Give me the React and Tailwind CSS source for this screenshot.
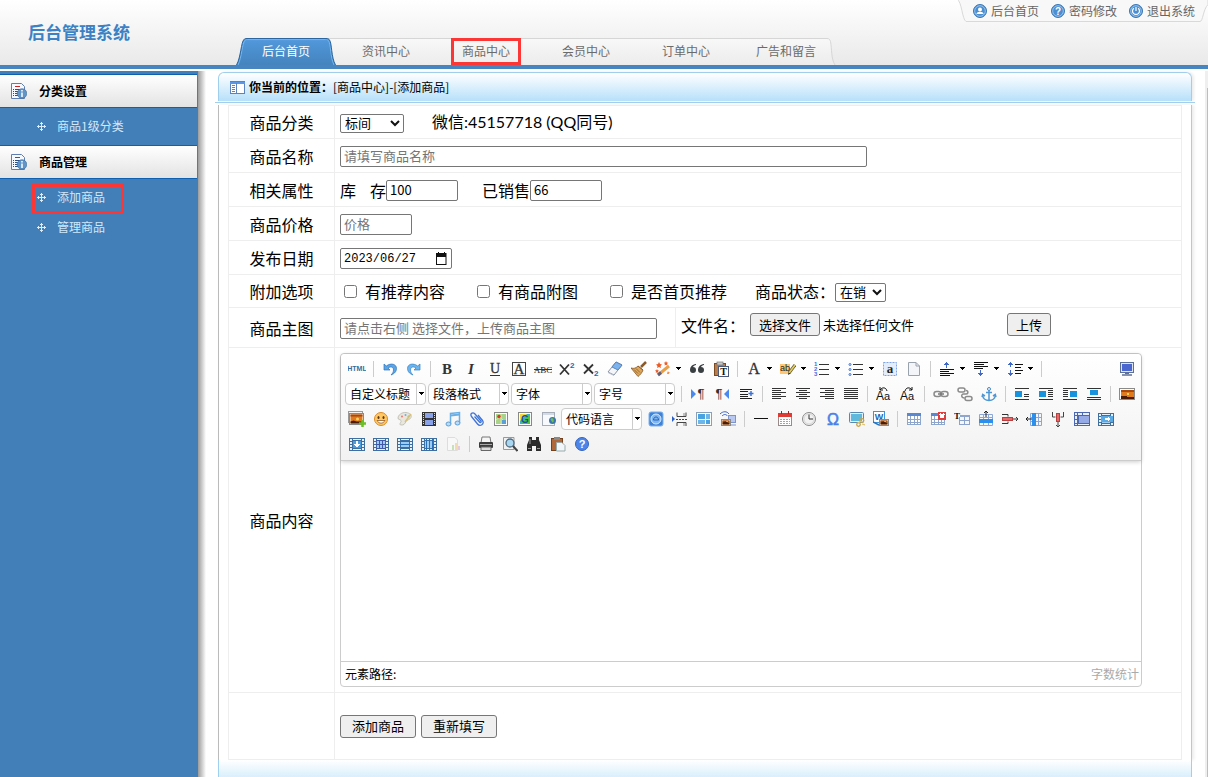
import React, { useState } from 'react';

const cjk = 'font-["Noto_Sans_CJK_SC",sans-serif]';

/* ---------- toolbar icons ---------- */

const Svg = ({ children, crisp }) => (
  <svg width="16" height="16" viewBox="0 0 16 16" fill="none" shapeRendering={crisp ? 'crispEdges' : 'auto'} aria-hidden="true">
    {children}
  </svg>
);

// rows: list of [x, y, width]
const Bars = ({ rows, color = '#333' }) =>
  rows.map(([x, y, w]) => <rect key={`${x}-${y}`} x={x} y={y} width={w} height="1" fill={color} />);

const TableGrid = ({ head = '#5b86d0', line = '#8fa6cc' }) => (
  <>
    <rect x="1.500" y="2.500" width="13" height="11" fill="#fff" stroke={line} />
    <rect x="1" y="2" width="14" height="3" fill={head} />
    <path d="M1 8.500H15M1 11.500H15M4.500 5V14M8.500 5V14M11.500 5V14" stroke={line} />
  </>
);

// blue cell block with perforated left and right edges
const Film = ({ children }) => (
  <>
    <rect x="0" y="2" width="16" height="13" fill="#3f6f9f" />
    {[3, 6, 9, 12].map((y) => (
      <React.Fragment key={y}>
        <rect x="1" y={y} width="2" height="2" fill="#e8f2fc" />
        <rect x="13" y={y} width="2" height="2" fill="#e8f2fc" />
      </React.Fragment>
    ))}
    <path d="M4 3h8v1H4zM4 13h8v1H4z" fill="#e8f2fc" />
    <rect x="4" y="5" width="8" height="7" fill="#9ccbf4" />
    {children}
  </>
);

const Sunset = ({ x, y, w, h }) => (
  <>
    <rect x={x} y={y} width={w} height={h} fill="#fff" stroke="#8a8a8a" />
    <rect x={x + 1} y={y + 1} width={w - 2} height={h - 2} fill="#e07a1c" />
    <rect x={x + 1} y={y + 1} width={w - 2} height="2" fill="#a8480e" />
    <circle cx={x + w / 2 + 1} cy={y + h / 2} r="1.500" fill="#ffd25c" />
    <path d={`M${x + 1} ${y + h - 1}v-2l3-1 3 1 ${w - 8} 0v2z`} fill="#4a1c05" />
  </>
);

const Serif = ({ children, size = 15, ...rest }) => (
  <text x="8" y="13" textAnchor="middle" fontFamily="Liberation Serif" fontSize={size} fill="#333" {...rest}>{children}</text>
);

const icons = {
  html: (
    <svg width="18" height="16" viewBox="0 0 18 16" aria-hidden="true">
      <text x="9" y="10" textAnchor="middle" fontFamily="Liberation Sans" fontWeight="bold" fontSize="7" fill="#336b9c">HTML</text>
    </svg>
  ),
  undo: (
    <Svg>
      <path d="M2 3v6h6L6 7c3-2 5.500-1 5.500 2 0 2-1 3.500-2.500 5 4-1.500 5.500-4 5.500-6.500C14.500 3 9 1.500 4.300 5z" fill="#5aa5e6" stroke="#2f74bd" strokeWidth=".7" />
    </Svg>
  ),
  redo: (
    <Svg>
      <path d="M14 3v6H8l2-2C7 5 4.500 6 4.500 9c0 2 1 3.500 2.500 5C3 12.500 1.500 10 1.500 7.500 1.500 3 7 1.500 11.700 5z" fill="#6cb4ec" stroke="#3585c9" strokeWidth=".7" />
    </Svg>
  ),
  bold: <Svg><Serif fontWeight="bold">B</Serif></Svg>,
  italic: <Svg><Serif fontWeight="bold" fontStyle="italic">I</Serif></Svg>,
  underline: <Svg><Serif y="12" size={14} stroke="#333" strokeWidth=".3">U</Serif><path d="M3 14.500H13" stroke="#333" /></Svg>,
  fontborder: <Svg><rect x="1.500" y="1.500" width="13" height="13" stroke="#444" /><Serif size={15} stroke="#333" strokeWidth=".3">A</Serif></Svg>,
  strike: (
    <svg width="18" height="16" viewBox="0 0 18 16" aria-hidden="true">
      <text x="9" y="12" textAnchor="middle" fontFamily="Liberation Serif" fontSize="9" fill="#222">ABC</text>
      <path d="M0 8.500H18" stroke="#333" />
    </svg>
  ),
  sup: (
    <Svg>
      <path d="M1 3.500l9 10M10 3.500l-9 10" stroke="#333" strokeWidth="1.800" />
      <text x="11" y="7" fontFamily="Liberation Sans" fontWeight="bold" fontSize="8" fill="#2c5fc4">2</text>
    </Svg>
  ),
  sub: (
    <Svg>
      <path d="M1 3.500l9 9M10 3.500l-9 9" stroke="#333" strokeWidth="1.800" />
      <text x="11" y="15" fontFamily="Liberation Sans" fontWeight="bold" fontSize="8" fill="#2c5fc4">2</text>
    </Svg>
  ),
  eraser: (
    <Svg>
      <path d="M9 1l6 3-8 10-6-3z" fill="#f4f6fa" stroke="#8792a8" />
      <path d="M9 1l6 3-4 5-6-3z" fill="#7ab3ee" stroke="#5a86bd" />
      <path d="M1 11l6 3v1l-6-3z" fill="#b7bfcc" />
    </Svg>
  ),
  brush: (
    <Svg>
      <path d="M15 1l-5 5" stroke="#8a5a2b" strokeWidth="2.500" />
      <path d="M0 7c3 1 5 0 7-2l5 4c-1 3-3 5-5 6.500z" fill="#dba75c" stroke="#8a561f" strokeWidth=".8" />
      <path d="M3 8.500l4 4M5 7.500l4 4M7 5l5 4" stroke="#8a561f" strokeWidth=".8" />
    </Svg>
  ),
  wand: (
    <Svg>
      <path d="M3 14L14 5" stroke="#e6a04a" strokeWidth="3" />
      <path d="M3 14l3-2.500" stroke="#5e5e7a" strokeWidth="3" />
      <path d="M4 1l1 2 2 .5L5.500 5 6 7 4 6 2 7l.5-2L1 3.500 3 3zM11 0l.7 1.500 1.600.3-1.200 1 .3 1.700L11 3.800l-1.400.7.3-1.700-1.200-1 1.600-.3zM2 8l.6 1.300 1.400.2-1 1 .2 1.400L2 11.300l-1.200.6.2-1.400-1-1 1.400-.2z" fill="#ee5a24" />
      <path d="M13 10l.6 1.300 1.400.2-1 1-1 .8-1-.8z" fill="#f0803c" />
    </Svg>
  ),
  quote: (
    <Svg>
      <path d="M7 3C3 3.500 1 6 1 9a3 3 0 1 0 3-3c.5-1 1.500-1.700 3-2zM15 3c-4 .5-6 3-6 6a3 3 0 1 0 3-3c.5-1 1.500-1.700 3-2z" fill="#3a3f42" />
    </Svg>
  ),
  pastetext: (
    <Svg>
      <rect x="1.500" y="2.500" width="11" height="12" fill="#b97c4c" stroke="#7d4a22" />
      <rect x="4" y="1" width="6" height="3" fill="#c9c9c9" stroke="#777" strokeWidth=".7" />
      <rect x="5.500" y="5.500" width="10" height="10" fill="#fff" stroke="#4a5a78" />
      <text x="10.500" y="14" textAnchor="middle" fontFamily="Liberation Serif" fontWeight="bold" fontSize="10" fill="#111">T</text>
    </Svg>
  ),
  forecolor: <Svg><Serif size={16} stroke="#333" strokeWidth=".3">A</Serif></Svg>,
  backcolor: (
    <Svg>
      <rect x="0" y="3" width="10" height="10" fill="#ffc773" />
      <text x="0" y="10" fontFamily="Liberation Sans" fontSize="9" fill="#222">ab</text>
      <path d="M15 4l-6 8" stroke="#6a5a2c" strokeWidth="3" />
      <path d="M15 4l-6 8" stroke="#e2cf62" strokeWidth="1.500" />
      <path d="M8 14l.5-2.500 2 1z" fill="#222" />
    </Svg>
  ),
  ol: (
    <Svg>
      <text x="0" y="5" fontFamily="Liberation Sans" fontWeight="bold" fontSize="6" fill="#3a72dd">1</text>
      <text x="0" y="10" fontFamily="Liberation Sans" fontWeight="bold" fontSize="6" fill="#3a72dd">2</text>
      <text x="0" y="15" fontFamily="Liberation Sans" fontWeight="bold" fontSize="6" fill="#3a72dd">3</text>
      <Bars rows={[[5, 3, 10], [5, 8, 10], [5, 13, 10]]} />
    </Svg>
  ),
  ul: (
    <Svg>
      {[3, 8, 13].map((y) => <circle key={y} cx="2" cy={y + 0.5} r="1" stroke="#3a72dd" />)}
      <Bars rows={[[5, 3, 10], [5, 8, 10], [5, 13, 10]]} />
    </Svg>
  ),
  selectall: (
    <Svg>
      <rect x="1.500" y="1.500" width="13" height="13" fill="#e3edfc" stroke="#7fa5e8" strokeDasharray="2 1" />
      <text x="8" y="12" textAnchor="middle" fontFamily="Liberation Serif" fontWeight="bold" fontSize="13" fill="#222">a</text>
    </Svg>
  ),
  page: (
    <Svg>
      <path d="M2.500 1.500H10l3.500 3.500v9.500h-11z" fill="#f3f5f8" stroke="#9aa2ad" />
      <path d="M10 1.500V5h3.500" stroke="#9aa2ad" />
    </Svg>
  ),
  rowtop: (
    <Svg crisp>
      <path d="M7 1h1v1h1v1h1v1H8v3H7V4H5V3h1V2h1z" fill="#3f68c8" />
      <Bars color="#111" rows={[[1, 8, 14], [1, 10, 9], [1, 12, 14], [1, 14, 10]]} />
    </Svg>
  ),
  rowbottom: (
    <Svg crisp>
      <Bars color="#111" rows={[[1, 1, 14], [1, 3, 10], [1, 5, 14], [1, 7, 9]]} />
      <path d="M7 9h1v3h2v1H9v1H8v1H7v-1H6v-1H5v-1h2z" fill="#3f68c8" />
    </Svg>
  ),
  lineheight: (
    <Svg crisp>
      <path d="M3 1h1v1h1v1h1v1H4v2H3V4H1V3h1V2h1zM3 9h1v3h2v1H5v1H4v1H3v-1H2v-1H1v-1h2z" fill="#3f68c8" />
      <Bars color="#111" rows={[[8, 3, 8], [8, 6, 6], [8, 9, 8], [8, 12, 6]]} />
    </Svg>
  ),
  fullscreen: (
    <Svg>
      <rect x="1.500" y="1.500" width="13" height="10" fill="#dfe6f2" stroke="#5c6f96" />
      <rect x="3" y="3" width="10" height="7" fill="#4a67d0" />
      <rect x="6" y="12" width="4" height="1" fill="#5c6f96" />
      <path d="M3 14H13" stroke="#5c6f96" strokeWidth="1.500" />
    </Svg>
  ),
  ltr: (
    <Svg>
      <path d="M1 3l5 5-5 5z" fill="#4a8af0" />
      <text x="11" y="12" textAnchor="middle" fontFamily="Liberation Sans" fontSize="13" fill="#333">¶</text>
    </Svg>
  ),
  rtl: (
    <Svg>
      <path d="M15 3l-5 5 5 5z" fill="#4a8af0" />
      <text x="5" y="12" textAnchor="middle" fontFamily="Liberation Sans" fontSize="13" fill="#333">¶</text>
    </Svg>
  ),
  indent: (
    <Svg>
      <Bars color="#222" rows={[[2, 3, 12], [2, 5, 8], [2, 8, 8], [2, 10, 8], [2, 12, 12]]} />
      <path d="M10.500 7.500h5M13 5v5" stroke="#3a72dd" strokeWidth="1.500" />
    </Svg>
  ),
  left: <Svg crisp><Bars rows={[[1, 2, 14], [1, 4, 9], [1, 6, 14], [1, 8, 9], [1, 10, 14], [1, 12, 9]]} /></Svg>,
  center: <Svg crisp><Bars rows={[[1, 2, 14], [4, 4, 8], [1, 6, 14], [4, 8, 8], [1, 10, 14], [4, 12, 8]]} /></Svg>,
  right: <Svg crisp><Bars rows={[[1, 2, 14], [6, 4, 9], [1, 6, 14], [6, 8, 9], [1, 10, 14], [6, 12, 9]]} /></Svg>,
  justify: <Svg crisp><Bars rows={[[1, 2, 14], [1, 4, 14], [1, 6, 14], [1, 8, 14], [1, 10, 14], [1, 12, 14]]} /></Svg>,
  upper: (
    <Svg>
      <text x="0" y="14" fontFamily="Liberation Sans" fontSize="12" fill="#111">A</text>
      <text x="8" y="14" fontFamily="Liberation Sans" fontSize="11" fill="#111">a</text>
      <path d="M4 4c2-3 6-3 7 1M4 1v3h3" stroke="#111" />
    </Svg>
  ),
  lower: (
    <Svg>
      <text x="0" y="14" fontFamily="Liberation Sans" fontSize="12" fill="#111">A</text>
      <text x="8" y="14" fontFamily="Liberation Sans" fontSize="11" fill="#111">a</text>
      <path d="M12 4C10 1 6 1 5 5M12 1v3H9" stroke="#111" />
    </Svg>
  ),
  link: (
    <Svg>
      <rect x="1" y="5.500" width="7" height="5" rx="2.500" stroke="#8b8b8b" strokeWidth="1.500" />
      <rect x="8" y="5.500" width="7" height="5" rx="2.500" stroke="#8b8b8b" strokeWidth="1.500" />
      <path d="M5 8h6" stroke="#777" strokeWidth="1.500" />
    </Svg>
  ),
  unlink: (
    <Svg>
      <rect x="1" y="2" width="7" height="4" rx="2" stroke="#8b8b8b" strokeWidth="1.500" />
      <rect x="8" y="10.500" width="7" height="4" rx="2" stroke="#8b8b8b" strokeWidth="1.500" />
      <path d="M9 4.500c2.500 0 2.500 3.500 0 3.500H6.500c-2.500 0-2.500 4 1 4" stroke="#8b8b8b" strokeWidth="1.500" />
    </Svg>
  ),
  anchor: (
    <Svg>
      <circle cx="8" cy="3" r="1.500" stroke="#3f8acb" />
      <path d="M8 4.500V14M5 6.500h6M1.500 9c.5 3.500 3 5.500 6.500 5.500s6-2 6.500-5.500M1 11l.7-2.500L4 10M15 11l-.7-2.500L12 10" stroke="#4f97d4" strokeWidth="1.500" />
    </Svg>
  ),
  imgleft: (
    <Svg crisp>
      <Bars rows={[[1, 2, 14], [10, 8, 5], [10, 10, 5], [1, 13, 14]]} />
      <rect x="1" y="5" width="7" height="6" fill="#1693dc" />
    </Svg>
  ),
  imgfloatleft: (
    <Svg crisp>
      <Bars rows={[[1, 2, 14], [10, 4, 5], [10, 6, 5], [10, 8, 5], [10, 10, 5], [1, 13, 14]]} />
      <rect x="1" y="5" width="7" height="6" fill="#1693dc" />
    </Svg>
  ),
  imgfloatright: (
    <Svg crisp>
      <Bars rows={[[1, 2, 14], [1, 4, 5], [1, 6, 5], [1, 8, 5], [1, 10, 5], [1, 13, 14]]} />
      <rect x="8" y="5" width="7" height="6" fill="#1693dc" />
    </Svg>
  ),
  imgcenter: (
    <Svg crisp>
      <Bars rows={[[1, 2, 14], [1, 11, 14], [1, 13, 14]]} />
      <rect x="4" y="4" width="8" height="5" fill="#1693dc" />
    </Svg>
  ),
  simpleupload: <Svg crisp><Sunset x={0.5} y={2.5} w={15} h={11} /></Svg>,
  images: (
    <svg width="18" height="16" viewBox="0 0 18 16" fill="none" aria-hidden="true">
      <rect x=".5" y=".5" width="14" height="11" fill="#f4f4f4" stroke="#999" />
      <Sunset x={1.5} y={2.5} w={14} h={11} />
      <path d="M14.500 9v7M11 12.500h7" stroke="#6cbf25" strokeWidth="2.500" />
    </svg>
  ),
  emotion: (
    <Svg>
      <circle cx="8" cy="8" r="6.500" fill="#ffc862" stroke="#dc8a26" />
      <ellipse cx="5.500" cy="6.500" rx="1" ry="1.500" fill="#5a3310" />
      <ellipse cx="10.500" cy="6.500" rx="1" ry="1.500" fill="#5a3310" />
      <path d="M4 9.500c2 3.500 6 3.500 8 0z" fill="#fff" stroke="#8a4a12" strokeWidth=".7" />
    </Svg>
  ),
  scrawl: (
    <Svg>
      <path d="M1 7c0-3 4-6 8-5.500s6 2.500 5 5-4 2-5 4-2 4-5 3.500 1-3 0-4.500S1 9 1 7z" fill="#e9e6dc" stroke="#b9b7ac" strokeWidth=".8" />
      <circle cx="5" cy="5.500" r="1" fill="#e77" />
      <circle cx="8.500" cy="4" r="1" fill="#6ab0e8" />
      <circle cx="11.500" cy="5.500" r="1" fill="#7c7" />
      <path d="M14 3L8 11" stroke="#d8c07a" strokeWidth="1.500" />
    </Svg>
  ),
  video: (
    <Svg crisp>
      <rect x="1" y="1" width="14" height="14" fill="#333" />
      <rect x="4" y="2" width="8" height="5" fill="#8aa3e8" />
      <rect x="4" y="9" width="8" height="5" fill="#8aa3e8" />
      <path d="M2.500 2v12M13.500 2v12" stroke="#ddd" strokeDasharray="1 1" />
    </Svg>
  ),
  music: (
    <Svg>
      <path d="M5.500 13V2.500l9-1V12" stroke="#6aaee6" strokeWidth="1.500" />
      <path d="M5.500 4.500l9-1" stroke="#6aaee6" strokeWidth="2" />
      <ellipse cx="3.500" cy="13" rx="2.500" ry="2" fill="#b8dcf8" stroke="#5c9ed8" />
      <ellipse cx="12.500" cy="12" rx="2.500" ry="2" fill="#b8dcf8" stroke="#5c9ed8" />
    </Svg>
  ),
  attachment: (
    <Svg>
      <path d="M5.500 5.500l5 5.500c1 1.200 2.300 0 1.300-1.200L6 3C3.500.5.5 3 2.500 5.500l6 7.500c2.500 3 7.500 0 5-3.500L9 4" stroke="#3f74d8" strokeWidth="1.300" />
    </Svg>
  ),
  map: (
    <Svg>
      <rect x="1.500" y="1.500" width="13" height="13" fill="#fff" stroke="#888" />
      <rect x="3" y="3" width="10" height="10" fill="#a8d38a" />
      <path d="M3 9l4-3 6 6M8 3v10" stroke="#e8e29a" />
      <rect x="9" y="9" width="4" height="4" fill="#5a9fd8" />
      <circle cx="6" cy="5.500" r="1.700" fill="#d63a2a" />
    </Svg>
  ),
  gmap: (
    <Svg>
      <rect x="1.500" y="1.500" width="13" height="13" fill="#fff" stroke="#888" />
      <rect x="3" y="3" width="10" height="10" fill="#2fb4d8" />
      <path d="M3 13L13 3v10z" fill="#4bc83a" />
      <path d="M3 3h7L3 10z" fill="#f5d93a" />
      <text x="8" y="12" textAnchor="middle" fontFamily="Liberation Sans" fontWeight="bold" fontSize="10" fill="#1c4fa0">G</text>
    </Svg>
  ),
  iframe: (
    <Svg>
      <rect x="1.500" y="1.500" width="12" height="13" fill="#f7f9fc" stroke="#a6adb8" />
      <rect x="2" y="2" width="11" height="2" fill="#d4dbe6" />
      <circle cx="11.500" cy="9.500" r="3.500" fill="#3b76af" />
      <path d="M9.500 8.500c1-2 3-1 3 0s1 2-1 3z" fill="#73c04a" />
    </Svg>
  ),
  webapp: (
    <Svg>
      <rect x="1" y="1" width="14" height="14" rx="2" fill="#3f83d8" stroke="#7fb0ea" />
      <circle cx="8" cy="8" r="5" fill="#7db6f2" stroke="#d8ebff" />
      <path d="M5.500 9c0-4 5-4 5 0z" stroke="#2b62b4" />
    </Svg>
  ),
  pagebreak: (
    <Svg>
      <path d="M0 5l3 3-3 3z" fill="#2c62c8" />
      <path d="M4 8.500h2m1 0h2m1 0h2m1 0h2M5 1.500v4h9v-4M5 15v-3.500h9V15" stroke="#444" />
      <path d="M12 12v3M12 2v3" stroke="#888" />
    </Svg>
  ),
  template: (
    <Svg crisp>
      <rect x="0.500" y="1.500" width="15" height="13" fill="#fff" stroke="#8aa0b8" />
      <rect x="2" y="3" width="7" height="5" fill="#4aa3e0" />
      <rect x="2" y="9" width="7" height="4" fill="#6db6ea" />
      <rect x="10" y="3" width="4" height="5" fill="#6db6ea" />
      <rect x="10" y="9" width="4" height="4" fill="#4aa3e0" />
    </Svg>
  ),
  background: (
    <Svg>
      <rect x="8.500" y="4.500" width="7" height="7" fill="#b9c8f0" stroke="#7d93cb" />
      <path d="M11 14h5" stroke="#7d93cb" />
      <path d="M0 3c3-3 7-3 9 0M2 5c2-2 4-2 5.500 0" stroke="#3a62c8" />
      <Sunset x={1.5} y={8.5} w={9} h={6} />
    </Svg>
  ),
  hr: <Svg crisp><rect x="1" y="7" width="14" height="1" fill="#111" /></Svg>,
  date: (
    <Svg crisp>
      <rect x="1.500" y="2.500" width="13" height="12" fill="#fff" stroke="#9a8a8a" />
      <rect x="1" y="2" width="14" height="4" fill="#dd3b34" />
      <path d="M4.500 0v3M11.500 0v3" stroke="#a8201c" />
      <path d="M3 8.500h10M3 10.500h10M3 12.500h10" stroke="#9aa5b5" strokeDasharray="2 1" />
    </Svg>
  ),
  time: (
    <Svg>
      <circle cx="8" cy="8" r="6.500" fill="#f2f2f2" stroke="#8a8a8a" />
      <circle cx="8" cy="8" r="5" stroke="#ccc" strokeWidth=".7" />
      <path d="M8 3.500V8h4" stroke="#333" />
    </Svg>
  ),
  omega: (
    <Svg>
      <text x="8" y="14" textAnchor="middle" fontFamily="Liberation Sans" fontSize="16" fill="#4a80e8" stroke="#4a80e8" strokeWidth=".6">Ω</text>
    </Svg>
  ),
  snap: (
    <Svg>
      <rect x="0.500" y="1.500" width="14" height="10" rx="1" fill="#e4eef8" stroke="#5888b0" />
      <rect x="2" y="3" width="11" height="7" fill="#5fb9dc" />
      <circle cx="13" cy="9.500" r="1.800" stroke="#c7a348" strokeWidth="1.300" />
      <circle cx="9.500" cy="13.500" r="1.800" stroke="#c7a348" strokeWidth="1.300" />
      <path d="M12 10l-3 2M13 13l3 1" stroke="#e0c26a" strokeWidth="1.300" />
    </Svg>
  ),
  word: (
    <Svg>
      <rect x="0.500" y="0.500" width="11" height="11" fill="#fff" stroke="#3f94dd" />
      <text x="6" y="9" textAnchor="middle" fontFamily="Liberation Sans" fontWeight="bold" fontSize="9" fill="#1d62b0">W</text>
      <path d="M0 11l6 3" stroke="#2f74bd" strokeWidth="1.500" />
      <Sunset x={6.5} y={8.5} w={9} h={6} />
    </Svg>
  ),
  table: <Svg crisp><TableGrid /></Svg>,
  deletetable: (
    <Svg crisp>
      <TableGrid />
      <rect x="8" y="1" width="8" height="8" fill="#e23b3b" />
      <path d="M10 3l4 4M14 3l-4 4" stroke="#fff" strokeWidth="1.500" />
    </Svg>
  ),
  title: (
    <Svg>
      <text x="0" y="8" fontFamily="Liberation Serif" fontWeight="bold" fontSize="9" fill="#111">T</text>
      <rect x="6" y="4" width="10" height="2" fill="#8fa6d0" />
      <path d="M5.500 6v8M5 9.500h11M5 13.500h11M10.500 6v8M15.500 6v8" stroke="#8aa2cc" />
    </Svg>
  ),
  insertrow: (
    <Svg>
      <path d="M1.500 3.500h13v11h-13zM1 6.500h14M5.500 3v12M10.500 3v12" stroke="#8ca6d8" />
      <rect x="1" y="8" width="14" height="4" fill="#2c8fec" />
      <path d="M8 6V0M6 2l2-2 2 2" stroke="#222" />
    </Svg>
  ),
  deleterow: (
    <Svg>
      <path d="M0 3.500h6v2M0 12.500h6v-2M11 8h5M14 6l2 2-2 2" stroke="#333" />
      <rect x="0.500" y="6.500" width="10" height="3" fill="#e66a6a" stroke="#b84040" />
    </Svg>
  ),
  insertcol: (
    <Svg>
      <path d="M4.500 2.500h11v12h-11zM4 6.500h12M4 10.500h12M12.500 2v13" stroke="#8ca6d8" />
      <rect x="6" y="2" width="4" height="13" fill="#2c8fec" />
      <path d="M6 8H0M2 6L0 8l2 2" stroke="#222" />
    </Svg>
  ),
  deletecol: (
    <Svg>
      <path d="M2.500 1v5h3M13.500 1v5h-3M8 11v5M6 14l2 2 2-2" stroke="#444" />
      <rect x="6.500" y="2.500" width="3" height="8" fill="#e66a6a" stroke="#b84040" />
    </Svg>
  ),
  mergecells: (
    <Svg crisp>
      <rect x="0.500" y="1.500" width="15" height="13" fill="#e8eefa" stroke="#4a67b0" />
      <rect x="4" y="4" width="11" height="8" fill="#96aae8" stroke="#4a67b0" />
      <path d="M3.500 1v13M0 4.500h4M0 8.500h4M0 12.500h16M8.500 1v3" stroke="#4a67b0" />
    </Svg>
  ),
  mergeright: <Svg crisp><Film><rect x="3" y="5" width="12" height="6" fill="#5aa8e4" /><path d="M7 7h3V6h1v1h1v2h-1v1h-1V9H7z" fill="#fff" /></Film></Svg>,
  mergedown: <Svg crisp><Film><rect x="4" y="5" width="8" height="7" fill="#4a9fe0" /><path d="M7 5h2v3h2v1h-1v1H9v1H7v-1H6V9H5V8h2z" fill="#fff" /></Film></Svg>,
  splitcells: <Svg crisp><Film><path d="M3 8.500h10M6.500 5v7M9.500 5v7M3 4.500h10M3 12.500h10" stroke="#4458a8" /></Film></Svg>,
  splitrows: <Svg crisp><Film><path d="M3 5.500h10M3 8.500h10M3 11.500h10" stroke="#2a6fb8" /></Film></Svg>,
  splitcols: <Svg crisp><Film><path d="M5.500 3v11M8.500 3v11M11.500 3v11" stroke="#2a6fb8" /></Film></Svg>,
  charts: (
    <Svg>
      <path d="M2.500 1.500H10l2.500 2.500v10.500h-10z" fill="#f8f8f8" stroke="#ddd" />
      <rect x="7" y="9" width="2" height="5" fill="#c6e0b8" />
      <rect x="10" y="7" width="2" height="7" fill="#f0dcae" />
      <rect x="13" y="10" width="2" height="4" fill="#e6cbe0" />
    </Svg>
  ),
  print: (
    <Svg>
      <path d="M4 1h8l1 6H3z" fill="#f6f6f6" stroke="#777" />
      <rect x="1" y="6" width="14" height="6" rx="1" fill="#3c3c3c" />
      <rect x="2" y="8" width="12" height="1" fill="#aaa" />
      <path d="M3 11h10v3.500H3z" fill="#ddd" stroke="#666" />
    </Svg>
  ),
  preview: (
    <Svg>
      <path d="M1.500 1.500H12v12H1.500z" fill="#f2f2f2" stroke="#999" />
      <circle cx="8" cy="7" r="4" fill="#a9d7f2" stroke="#4f6b80" strokeWidth="1.300" />
      <path d="M11 10l4.500 5" stroke="#444" strokeWidth="2" />
    </Svg>
  ),
  search: (
    <Svg>
      <path d="M3 1h3v3h4V1h3v3l2 5v6h-5v-5H6v5H1V9l2-5z" fill="#2c2c2c" />
      <path d="M2 12.500h3M11 12.500h3M4 3v5" stroke="#999" />
    </Svg>
  ),
  paste: (
    <Svg>
      <rect x="1.500" y="2.500" width="11" height="12" fill="#b0683a" stroke="#74401c" />
      <rect x="4" y="1" width="6" height="3" fill="#888" />
      <path d="M6.500 6.500H12l3 3v5.500H6.500z" fill="#f2f5fa" stroke="#9aa" />
    </Svg>
  ),
  help: (
    <Svg>
      <circle cx="8" cy="8" r="6.500" fill="#4d86e8" stroke="#3564c0" />
      <text x="8" y="12" textAnchor="middle" fontFamily="Liberation Sans" fontWeight="bold" fontSize="11" fill="#fff">?</text>
    </Svg>
  ),
};

// "|" is a separator, a trailing "+" marks a split button, "=" opens a combo box
const toolbar = [
  ['html', '|', 'undo', 'redo', '|', 'bold', 'italic', 'underline', 'fontborder', 'strike', 'sup', 'sub', 'eraser', 'brush', 'wand+', 'quote', 'pastetext', '|', 'forecolor+', 'backcolor+', 'ol+', 'ul+', 'selectall', 'page', '|', 'rowtop+', 'rowbottom+', 'lineheight+', '|'],
  ['=自定义标题', '=段落格式', '=字体', '=字号', '|', 'ltr', 'rtl', 'indent', '|', 'left', 'center', 'right', 'justify', '|', 'upper', 'lower', '|', 'link', 'unlink', 'anchor', '|', 'imgleft', 'imgfloatleft', 'imgfloatright', 'imgcenter', '|', 'simpleupload'],
  ['images', 'emotion', 'scrawl', 'video', 'music', 'attachment', 'map', 'gmap', 'iframe', '=代码语言', 'webapp', 'pagebreak', 'template', 'background', '|', 'hr', 'date', 'time', 'omega', 'snap', 'word', '|', 'table', 'deletetable', 'title', 'insertrow', 'deleterow', 'insertcol', 'deletecol', 'mergecells', 'mergeright'],
  ['mergedown', 'splitcells', 'splitrows', 'splitcols', 'charts', '|', 'print', 'preview', 'search', 'paste', 'help'],
];

const Caret = () => (
  <svg width="5" height="3" viewBox="0 0 5 3" shapeRendering="crispEdges" aria-hidden="true">
    <path d="M0 0h5L2.500 3z" fill="#000" />
  </svg>
);

const ToolItem = ({ item }) => {
  if (item === '|') {
    return (
      <span className="flex w-[9px] justify-center">
        <span className="h-4 w-px bg-[#ccc]" />
      </span>
    );
  }
  if (item.startsWith('=')) {
    return (
      <button type="button" className="mr-0.5 flex h-[22px] w-[81px] items-stretch rounded-sm border border-[#ccc] bg-white text-left text-xs leading-5 text-black">
        <span className="flex-1 whitespace-nowrap pl-1">{item.slice(1)}</span>
        <span className="flex w-[9px] items-center justify-center border-l border-[#ccc]">
          <Caret />
        </span>
      </button>
    );
  }
  const split = item.endsWith('+');
  const name = split ? item.slice(0, -1) : item;
  return (
    <button type="button" aria-label={name} className="flex h-6 items-center">
      <span className="flex w-6 justify-center">{icons[name]}</span>
      {split && (
        <span className="flex w-[10px] pl-px">
          <Caret />
        </span>
      )}
    </button>
  );
};

const Editor = () => (
  <div className="w-[802px] max-w-full rounded border border-[#ccc] bg-white">
    <div className="relative rounded-t border-b border-[#ccc] bg-linear-to-b from-white to-[#f2f2f2] pb-1 pl-1 pt-0.5 shadow-[0_1px_4px_rgba(0,0,0,0.2)]">
      {toolbar.map((row, i) => (
        <div key={i} className="flex h-[25px] items-center">
          {row.map((item, j) => (
            <ToolItem key={j} item={item} />
          ))}
          {i === 0 && (
            <div className="ml-auto pr-0.5">
              <ToolItem item="fullscreen" />
            </div>
          )}
        </div>
      ))}
    </div>
    <textarea id="content" className="block h-[200px] w-full resize-none px-2 py-1 text-base outline-none" />
    <div className="flex h-[25px] items-center justify-between border-t border-[#ccc] pl-1 pr-0.5 text-xs">
      <span>元素路径:</span>
      <span className="text-[#aaa]">字数统计</span>
    </div>
  </div>
);

/* ---------- page chrome ---------- */

const utilities = [
  {
    label: '后台首页',
    icon: (
      <>
        <circle cx="7" cy="5.500" r="2" fill="#fff" />
        <path d="M3.500 10c0-3 7-3 7 0z" fill="#fff" />
      </>
    ),
  },
  {
    label: '密码修改',
    icon: <text x="7" y="10.500" textAnchor="middle" fontFamily="Liberation Sans" fontWeight="bold" fontSize="10" fill="#fff">?</text>,
  },
  {
    label: '退出系统',
    icon: <path d="M7 3v4M4.800 4.200a3.500 3.500 0 1 0 4.400 0" stroke="#fff" strokeWidth="1.200" fill="none" />,
  },
];

const tabs = ['后台首页', '资讯中心', '商品中心', '会员中心', '订单中心', '广告和留言'];

const Tab = ({ label, active, marked, last }) => (
  <li className={`relative flex h-[27px] w-[100px] items-center justify-center ${active || last ? '' : 'border-t border-[#d6d6d6] bg-linear-to-b from-[#f8f8f8] to-[#ececec]'}`}>
    {active && (
      <svg className="absolute inset-0" width="100" height="27" viewBox="0 0 100 27" fill="none" aria-hidden="true">
        <defs>
          <linearGradient id="tabFill" x1="0" y1="0" x2="0" y2="1">
            <stop offset="0" stopColor="#5299dc" />
            <stop offset="1" stopColor="#4483be" />
          </linearGradient>
          <linearGradient id="tabRest" x1="0" y1="0" x2="0" y2="1">
            <stop offset="0" stopColor="#f8f8f8" />
            <stop offset="1" stopColor="#ececec" />
          </linearGradient>
        </defs>
        <path d="M90 .5h10V27H90z" fill="url(#tabRest)" />
        <path d="M90 .5h10" stroke="#d6d6d6" />
        <path d="M.5 27C5 19 5 4 8 1.500 8.500 .7 9.500 .5 11 .5h79c2 0 3 .5 3.500 1.500C96 5 95 19 99.500 27z" fill="url(#tabFill)" />
        <path d="M2 27C6 19 6 5 9 2.500c.5-.7 1-.9 2.500-.9h78c1.500 0 2.500.2 3 1.200C95 6 94 19 98 27" stroke="#74b6ee" />
        <path d="M.5 27C5 19 5 4 8 1.500 8.500 .7 9.500 .5 11 .5h79c2 0 3 .5 3.500 1.500C96 5 95 19 99.500 27" stroke="#2c659f" />
      </svg>
    )}
    {last && (
      <svg className="absolute inset-0" width="100" height="27" viewBox="0 0 100 27" aria-hidden="true">
        <path d="M0 .5h91c2 0 3 1 3.500 3C96 11 95 21 99 27H0z" fill="url(#tabRest)" />
        <path d="M0 .5h91c2 0 3 1 3.500 3C96 11 95 21 99 27" fill="none" stroke="#d6d6d6" />
      </svg>
    )}
    <a
      href="#"
      className={`relative flex items-center justify-center pb-0.5 text-xs ${active ? 'text-white' : 'text-[#6b6b6b]'} ${marked ? '-mt-px h-[27px] w-[70px] border-[3px] border-[#fc3535]' : ''}`}
    >
      {label}
    </a>
  </li>
);

const Header = () => (
  <header className="mb-0.5 flex h-[69px] border-b-4 border-[#4785c0] bg-linear-to-b from-white to-[#e9e9e9]">
    <h1 className="w-[236px] pl-7 pt-5 text-[17px] font-bold leading-6 text-[#3b81c4]">后台管理系统</h1>
    <ul className="flex self-end">
      {tabs.map((label, i) => (
        <Tab key={label} label={label} active={i === 0} marked={i === 2} last={i === tabs.length - 1} />
      ))}
    </ul>
    <nav className="relative ml-auto h-[22px] w-[251px]">
      <svg className="absolute inset-0" width="251" height="22" viewBox="0 0 251 22" aria-hidden="true">
        <path d="M0-1c5 3 5 20 9 22.500h234c3 0 3-12 8-17V-1z" fill="#f8f8f8" stroke="#d9d9d9" />
      </svg>
      <div className="relative flex h-[22px] items-center gap-3 pl-4">
        {utilities.map((u) => (
          <a key={u.label} href="#" className="flex items-center gap-1 whitespace-nowrap text-xs text-[#666]">
            <svg width="14" height="14" viewBox="0 0 14 14" aria-hidden="true">
              <circle cx="7" cy="7" r="6.500" fill="#4a8fd2" stroke="#3a76b4" />
              <circle cx="7" cy="7" r="5.300" fill="none" stroke="#a9cdee" strokeWidth=".8" />
              {u.icon}
            </svg>
            {u.label}
          </a>
        ))}
      </div>
    </nav>
  </header>
);

const menu = [
  { title: '分类设置', items: [{ label: '商品1级分类' }] },
  { title: '商品管理', items: [{ label: '添加商品', marked: true }, { label: '管理商品' }] },
];

const Sidebar = () => (
  <aside className="w-[198px] shrink-0 bg-[#427eb7] pt-[3px]">
    {menu.map((group) => (
      <section key={group.title}>
        <h2 className="mr-px flex h-[34px] items-center border-y border-[#0f60ae] bg-linear-to-b from-white to-[#e3e3e3] pl-[11px] text-xs font-bold text-black">
          <svg className="mr-3" width="16" height="16" viewBox="0 0 16 16" fill="none" aria-hidden="true">
            <path d="M.5.500h10l3 3v12H.5z" fill="#f5f8fd" stroke="#5f7db0" />
            <path d="M4 3.500h5" stroke="#c22" />
            <path d="M2 6.500h1m1 0h7M2 8.500h1m1 0h4M2 10.500h1m1 0h3M2 12.500h1m1 0h3" stroke="#2c4d80" />
            <circle cx="11" cy="10.500" r="4.800" fill="#5f95c8" stroke="#3c6c9c" strokeWidth=".6" />
            <path d="M11 7v1.500M11 9.500V14" stroke="#fff" strokeWidth="1.500" />
          </svg>
          {group.title}
        </h2>
        <ul className="pb-1 pt-[3px]">
          {group.items.map((item) => (
            <li key={item.label} className="relative flex h-[30px] items-center pl-[37px]">
              {item.marked && <span className="pointer-events-none absolute left-8 top-0.5 h-[30px] w-[92px] border-[3px] border-[#fc3535]" />}
              <a href="#" className="flex items-center gap-[11px] text-xs text-[#cfe8fb]">
                <svg width="9" height="9" viewBox="0 0 9 9" fill="none" shapeRendering="crispEdges" aria-hidden="true">
                  <path d="M4.500 0v9M0 4.500h9M3 1.500h3M3 7.500h3M1.500 3v3M7.500 3v3" stroke="#dcecfa" />
                </svg>
                {item.label}
              </a>
            </li>
          ))}
        </ul>
      </section>
    ))}
  </aside>
);

/* ---------- form ---------- */

const inputClass = 'mt-0.5 h-[21px] rounded-xs border border-[#767676] bg-white px-[3px] pb-0.5 text-[13px] leading-4 text-black placeholder-[#757575]';
const buttonClass = 'flex h-[23px] items-center rounded-[3px] border border-[#767676] bg-[#efefef] text-[13px] text-black';

const Select = ({ id, width, options }) => (
  <span className={`relative mt-0.5 flex ${width}`}>
    <select id={id} className="h-[19px] w-full appearance-none rounded-xs border border-[#767676] bg-white pb-px pl-1 text-[13px] leading-4 text-black">
      {options.map((o) => (
        <option key={o}>{o}</option>
      ))}
    </select>
    <svg className="pointer-events-none absolute right-1 top-1.5" width="10" height="7" viewBox="0 0 10 7" fill="none" aria-hidden="true">
      <path d="M1 1l4 4 4-4" stroke="#111" strokeWidth="2" />
    </svg>
  </span>
);

const Row = ({ label, htmlFor, height, children }) => (
  <div className={`flex border-b border-[#eee] ${height}`}>
    <div className="flex w-[106px] shrink-0 items-center justify-center border-r border-[#eee]">
      {label && <label htmlFor={htmlFor}>{label}</label>}
    </div>
    <div className="flex min-w-0 flex-1 items-center px-[5px]">{children}</div>
  </div>
);

const Check = ({ id, label }) => (
  <span className="mr-7 flex items-center">
    <input id={id} type="checkbox" className="ml-1 mr-2 size-[13px]" />
    <label htmlFor={id}>{label}</label>
  </span>
);

const ProductForm = () => {
  const [fileName, setFileName] = useState('未选择任何文件');

  return (
    <form className="border-x border-t border-[#eee] text-base leading-6 text-black">
      <Row label="商品分类" htmlFor="category" height="min-h-[33px]">
        <Select id="category" width="w-16" options={['标间']} />
        <span className={'ml-7 font-["Lato","Noto_Sans_CJK_SC",sans-serif]'}>微信:45157718 (QQ同号)</span>
      </Row>
      <Row label="商品名称" htmlFor="name" height="min-h-[34px]">
        <input id="name" placeholder="请填写商品名称" className={`${inputClass} w-[527px]`} />
      </Row>
      <Row label="相关属性" htmlFor="stock" height="min-h-[34px]">
        <label htmlFor="stock" className="flex gap-[14px]">
          <span>库</span>
          <span>存</span>
        </label>
        <input id="stock" defaultValue="100" className={`${inputClass} w-[72px]`} />
        <label htmlFor="sold" className="ml-6">已销售</label>
        <input id="sold" defaultValue="66" className={`${inputClass} w-[72px]`} />
      </Row>
      <Row label="商品价格" htmlFor="price" height="min-h-[34px]">
        <input id="price" placeholder="价格" className={`${inputClass} w-[72px]`} />
      </Row>
      <Row label="发布日期" htmlFor="date" height="min-h-[34px]">
        <div className="mt-0.5 flex h-[21px] w-28 items-center rounded-xs border border-[#767676] px-[3px]">
          <input id="date" defaultValue="2023/06/27" className={'w-[88px] font-["Liberation_Mono",monospace] text-xs outline-none'} />
          <button type="button" aria-label="选择日期" className="ml-auto">
            <svg width="13" height="14" viewBox="0 0 13 14" aria-hidden="true">
              <path d="M3 0h1v1h5V0h1v1h1.500v12H1V1h2zM2 5v7h8.500V5z" fill="#111" fillRule="evenodd" />
            </svg>
          </button>
        </div>
      </Row>
      <Row label="附加选项" height="min-h-[33px]">
        <Check id="recommend" label="有推荐内容" />
        <Check id="gallery" label="有商品附图" />
        <Check id="home" label="是否首页推荐" />
        <label htmlFor="status">商品状态：</label>
        <Select id="status" width="w-[51px]" options={['在销']} />
      </Row>
      <Row label="商品主图" htmlFor="cover" height="min-h-[40px]">
        <input id="cover" placeholder="请点击右侧 选择文件，上传商品主图" className={`${inputClass} w-[317px]`} />
        <div className="ml-[18px] flex items-start self-stretch border-l border-[#eee] pl-[5px] pt-[5px]">
          <span className="w-[69px]">文件名：</span>
          <label htmlFor="file" className={`${buttonClass} cursor-default px-2`}>选择文件</label>
          <input id="file" type="file" className="hidden" onChange={(e) => setFileName(e.target.files[0]?.name ?? '未选择任何文件')} />
          <span className="ml-[3px] w-[184px] truncate text-[13px]">{fileName}</span>
          <button type="button" className={`${buttonClass} px-2`}>上传</button>
        </div>
      </Row>
      <Row label="商品内容" htmlFor="content" height="py-0">
        <div className="w-full py-[5px]">
          <Editor />
        </div>
      </Row>
      <Row height="min-h-[67px]">
        <button type="submit" className={`${buttonClass} mr-[5px] px-[11px]`}>添加商品</button>
        <button type="reset" className={`${buttonClass} px-[11px]`}>重新填写</button>
      </Row>
    </form>
  );
};

const App = () => (
  <div className={`flex min-h-screen flex-col bg-white ${cjk}`}>
    <Header />
    <div className="flex flex-1">
      <Sidebar />
      <div className="w-2 bg-linear-to-r from-[#9c9c9c] to-white" />
      <main className="flex min-w-0 flex-1 flex-col pl-[9px] pr-[10px] pt-px">
        <div className="mx-[3px] mb-px flex h-[29px] items-center rounded-t-md border-x border-t border-[#a0cfee] bg-linear-to-b from-white to-[#b6e0fa] pl-[11px] text-xs shadow-[2px_0_3px_rgba(0,0,0,0.08)]">
          <svg className="mr-1" width="15" height="13" viewBox="0 0 15 13" fill="none" shapeRendering="crispEdges" aria-hidden="true">
            <rect x=".5" y=".5" width="14" height="12" fill="#fff" stroke="#5c82c0" />
            <path d="M0 1.500h15" stroke="#5c96e4" strokeWidth="2" />
            <path d="M6.500 2v11" stroke="#5c82c0" />
            <path d="M2 4.500h3M2 6.500h3M2 8.500h3M2 10.500h3" stroke="#5b86c4" />
          </svg>
          <strong>你当前的位置：</strong>
          <span>[商品中心]-[添加商品]</span>
        </div>
        <div className="mb-0.5 h-px bg-[#a3cfec]" />
        <div className="mx-[3px] border-l border-r border-l-[#bbb] border-r-[#a6cfe6] px-[9px] shadow-[2px_0_3px_rgba(0,0,0,0.08)]">
          <ProductForm />
        </div>
        <div className="mx-[3px] min-h-[17px] flex-1 border-x border-[#9fd0f0] bg-linear-to-b from-white to-[#d9effc]" />
      </main>
      <div className="w-[3px] bg-[#efefef] pt-[17px]">
        <div className="ml-0.5 h-full bg-[#bdbdbd]" />
      </div>
    </div>
  </div>
);

export default App;
